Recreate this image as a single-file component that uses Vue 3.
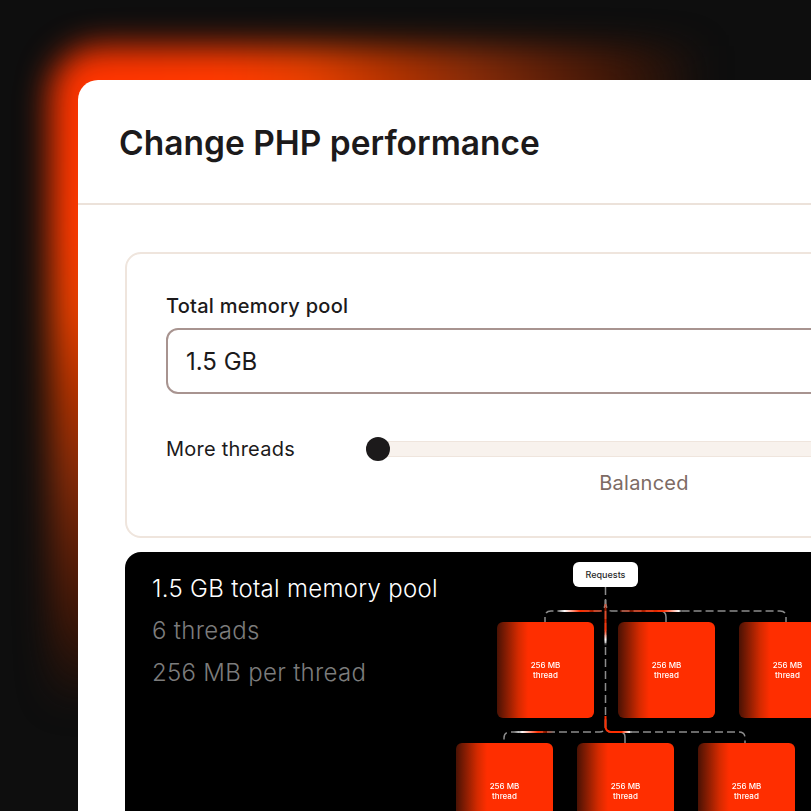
<script setup>
const row1 = [1, 2, 3];
const row2 = [1, 2, 3];
</script>

<template>
  <div class="page">
    <div class="glow"></div>
    <div class="card">
      <header class="card-head">
        <h1>Change PHP performance</h1>
      </header>
      <div class="card-body">
        <section class="form-box">
          <label class="field-label">Total memory pool</label>
          <div class="input">1.5 GB</div>
          <div class="slider-row">
            <span class="slider-label">More threads</span>
            <div class="slider">
              <div class="track"><span class="thumb"></span></div>
              <span class="slider-value">Balanced</span>
            </div>
          </div>
        </section>

        <section class="panel">
          <div class="stats">
            <p class="on">1.5 GB total memory pool</p>
            <p>6 threads</p>
            <p>256 MB per thread</p>
          </div>

          <div class="diagram">
            <svg class="wires" width="400" height="259" viewBox="440 552 400 259" fill="none">
              <defs>
                <linearGradient id="hlA" gradientUnits="userSpaceOnUse" x1="558" y1="0" x2="602" y2="0">
                  <stop offset="0" stop-color="#fff" stop-opacity="0" />
                  <stop offset="0.15" stop-color="#fff" />
                  <stop offset="0.5" stop-color="#ff2e00" />
                  <stop offset="1" stop-color="#ff2e00" stop-opacity="0.4" />
                </linearGradient>
                <linearGradient id="hlB" gradientUnits="userSpaceOnUse" x1="620" y1="0" x2="682" y2="0">
                  <stop offset="0" stop-color="#ff2e00" stop-opacity="0.3" />
                  <stop offset="0.7" stop-color="#ff2e00" />
                  <stop offset="0.95" stop-color="#fff" />
                  <stop offset="1" stop-color="#fff" stop-opacity="0" />
                </linearGradient>
                <linearGradient id="hlV" gradientUnits="userSpaceOnUse" x1="0" y1="604" x2="0" y2="646">
                  <stop offset="0" stop-color="#ff2e00" stop-opacity="0.5" />
                  <stop offset="0.6" stop-color="#ff2e00" />
                  <stop offset="0.85" stop-color="#fff" />
                  <stop offset="1" stop-color="#fff" stop-opacity="0" />
                </linearGradient>
                <linearGradient id="hlC" gradientUnits="userSpaceOnUse" x1="514" y1="0" x2="554" y2="0">
                  <stop offset="0" stop-color="#fff" stop-opacity="0" />
                  <stop offset="0.2" stop-color="#fff" />
                  <stop offset="0.6" stop-color="#ff2e00" />
                  <stop offset="1" stop-color="#ff2e00" stop-opacity="0" />
                </linearGradient>
                <linearGradient id="hlD" gradientUnits="userSpaceOnUse" x1="606" y1="0" x2="632" y2="0">
                  <stop offset="0" stop-color="#ff2e00" />
                  <stop offset="0.6" stop-color="#ff2e00" />
                  <stop offset="0.9" stop-color="#fff" />
                  <stop offset="1" stop-color="#fff" stop-opacity="0" />
                </linearGradient>
              </defs>

              <g stroke="#8c8c8c" stroke-width="1.5" stroke-dasharray="8 4">
                <path d="M605.5 587V726q0 6 6 6H739q6 0 6 6v5" />
                <path d="M605.5 720v6q0 6-6 6H510q-6 0-6 6v5" />
                <path d="M605.5 600q0 11-6 11H551q-6 0-6 6v5" />
                <path d="M605.5 600q0 11 6 11H780q6 0 6 6v5" />
                <path d="M660 611q6 0 6 6v5" stroke-dasharray="none" />
                <path d="M620 732q5 0 5 5v6" stroke-dasharray="none" />
              </g>

              <g stroke-width="2">
                <path d="M558 611H602" stroke="url(#hlA)" />
                <path d="M620 611H682" stroke="url(#hlB)" />
                <path d="M605.5 604V646" stroke="url(#hlV)" />
                <path d="M514 732H554" stroke="url(#hlC)" />
                <path d="M605.5 716v10q0 6 6 6H632" stroke="url(#hlD)" />
              </g>
            </svg>

            <div class="requests">Requests</div>

            <div class="threads first">
              <div v-for="n in row1" :key="n" class="thread">256 MB<br />thread</div>
            </div>
            <div class="threads second">
              <div v-for="n in row2" :key="n" class="thread">256 MB<br />thread</div>
            </div>
          </div>
        </section>
      </div>
    </div>
  </div>
</template>

<style>
html,
body {
  background: #0e0e0e;
}
</style>

<style scoped>
.page {
  position: relative;
  width: 811px;
  height: 811px;
  overflow: hidden;
  background: #0e0e0e;
  padding: 80px 0 0 78px;
  box-sizing: border-box;
  font-family: Inter, "Liberation Sans", sans-serif;
}

/* orange light behind the corner of the card */
.glow {
  position: absolute;
  left: 50px;
  top: 46px;
  width: 900px;
  height: 900px;
  border-radius: 50px;
  background: radial-gradient(circle at 28px 34px, #ff3400 0, #ff3a00 150px, #e84000 230px, #b03200 320px, #8a2c08 390px, #5a1e08 480px, #3a1608 545px, rgba(14, 14, 14, 0) 630px);
  filter: blur(16px);
}

.card {
  position: relative;
  width: 1000px;
  height: 900px;
  background: #fff;
  border-radius: 20px 0 0 0;
}

.card-head {
  height: 123px;
  padding: 0 41px;
  display: flex;
  align-items: center;
  border-bottom: 2px solid #ece2da;
}

h1 {
  margin: 3px 0 0;
  font-size: 33.5px;
  font-weight: 600;
  color: #1c1a1b;
}

.card-body {
  padding: 47px 0 0 47px;
}

.form-box {
  width: 836px;
  height: 286px;
  box-sizing: border-box;
  border: 2px solid #efe5dd;
  border-radius: 16px;
  padding: 38px 39px 0;
}

.field-label {
  display: block;
  font-size: 20px;
  font-weight: 500;
  letter-spacing: 0.25px;
  line-height: 28px;
  color: #1c1a1b;
}

.input {
  margin-top: 8px;
  height: 66px;
  box-sizing: border-box;
  border: 2px solid #a89490;
  border-radius: 12px;
  padding-left: 18px;
  display: flex;
  align-items: center;
  font-size: 24px;
  color: #1c1a1b;
}

.slider-row {
  display: flex;
  margin-top: 41px;
}

.slider-label {
  width: 200px;
  font-size: 20px;
  letter-spacing: 0.25px;
  line-height: 28px;
  color: #1c1a1b;
}

.slider {
  flex: 1;
  display: flex;
  flex-direction: column;
  align-items: center;
}

.track {
  position: relative;
  width: 100%;
  height: 16px;
  margin-top: 6px;
  box-sizing: border-box;
  background: #f8f2ed;
  border: 1px solid #efe5dd;
  border-radius: 8px;
}

.thumb {
  position: absolute;
  left: -1px;
  top: -5px;
  width: 24px;
  height: 24px;
  border-radius: 50%;
  background: #1c1a1b;
}

.slider-value {
  margin: 12px 0 0 2px;
  font-size: 20px;
  letter-spacing: 0.25px;
  line-height: 28px;
  color: #7d6b64;
}

.panel {
  position: relative;
  margin-top: 14px;
  width: 836px;
  height: 400px;
  background: #000;
  border-radius: 16px;
  display: flex;
}

.stats {
  padding: 20px 0 0 27px;
  width: 318px;
  box-sizing: border-box;
  font-size: 24px;
  letter-spacing: 0.3px;
  font-weight: 300;
  color: #7c7c7c;
}

.stats p {
  margin: 0 0 8px;
  line-height: 34px;
  white-space: nowrap;
}

.stats .on {
  color: #fff;
}

.diagram {
  position: relative;
  flex: 1;
  padding: 10px 0 0 9px;
  filter: blur(0.5px);
}

.wires {
  position: absolute;
  left: -3px;
  top: 0;
}

.requests {
  position: relative;
  margin-left: 121px;
  width: 65px;
  height: 25px;
  background: #fff;
  border-radius: 6px;
  display: flex;
  align-items: center;
  justify-content: center;
  font-size: 9px;
  font-weight: 500;
  color: #2a2a2a;
}

.threads {
  position: relative;
  display: flex;
  gap: 24px;
}

.first {
  margin: 35px 0 0 45px;
}

.second {
  margin: 25px 0 0 4px;
}

.thread {
  flex: none;
  width: 97px;
  height: 96px;
  border-radius: 6px;
  background: linear-gradient(90deg, #4a1204 0, #d42a00 22%, #ff2e00 32%, #ff2e00 100%);
  color: #fff;
  display: flex;
  align-items: center;
  justify-content: center;
  text-align: center;
  font-size: 8px;
  font-weight: 500;
  line-height: 10px;
}
</style>
